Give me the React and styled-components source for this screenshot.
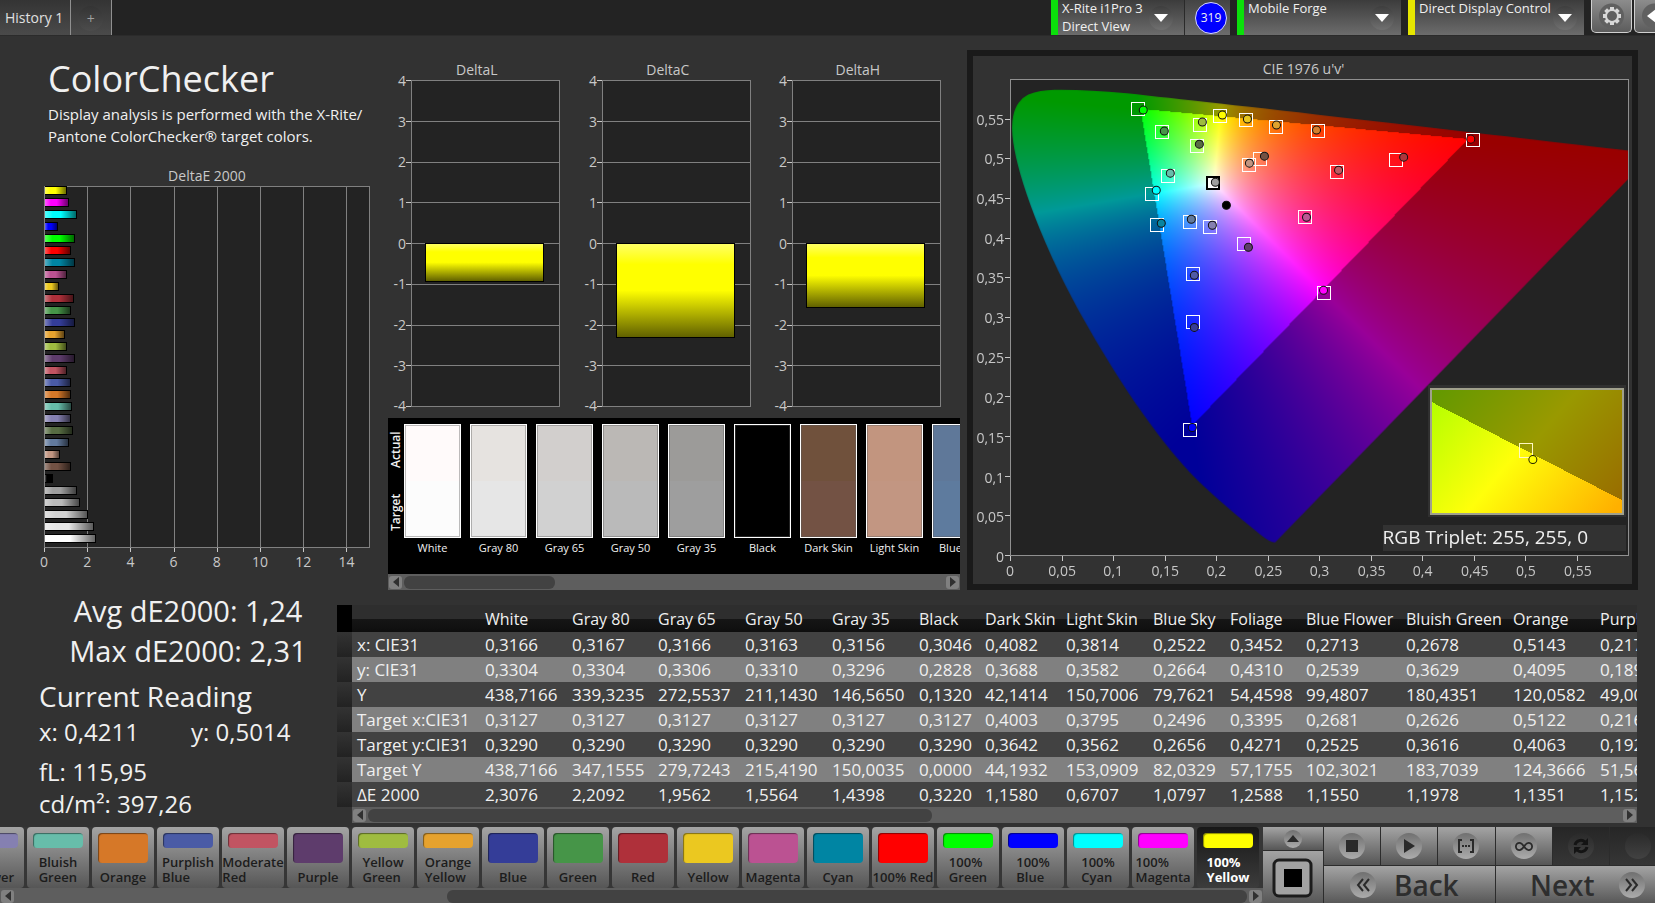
import React, { useEffect, useRef } from "react";
import styled, { createGlobalStyle, css } from "styled-components";

const FONT = '"Open Sans", "Noto Sans", "Liberation Sans", sans-serif';

const COLORS = {
  page: "#323232",
  dark: "#232323",
  frame: "#1a1a1a",
  grid: "#808080",
  tick: "#c8c8c8",
  text: "#f0f0f0",
  track: "#5e5e5e",
  thumb: "#424242",
};

const PATCHES = [
  { name: "White", color: "#ffffff", actual: "#fffafa", target: "#fcfcfc", de: 2.3076 },
  { name: "Gray 80", color: "#e6e6e6", actual: "#e6e3e0", target: "#e6e6e6", de: 2.2092 },
  { name: "Gray 65", color: "#d1d1d1", actual: "#d2cfcd", target: "#d1d1d1", de: 1.9562 },
  { name: "Gray 50", color: "#bababa", actual: "#bbb8b5", target: "#bababa", de: 1.5564 },
  { name: "Gray 35", color: "#9e9e9e", actual: "#9c9b99", target: "#9e9e9e", de: 1.4398 },
  { name: "Black", color: "#000000", actual: "#000000", target: "#000000", de: 0.322 },
  { name: "Dark Skin", color: "#735244", actual: "#70513c", target: "#735244", de: 1.158 },
  { name: "Light Skin", color: "#c29682", actual: "#c2957f", target: "#c29682", de: 0.6707 },
  { name: "Blue Sky", color: "#627a9d", actual: "#5f7899", target: "#5e7b9e", de: 1.0797 },
  { name: "Foliage", color: "#576c43", de: 1.2588 },
  { name: "Blue Flower", color: "#8580b1", de: 1.155 },
  { name: "Bluish Green", color: "#67bdaa", de: 1.1978 },
  { name: "Orange", color: "#d67828", de: 1.1351 },
  { name: "Purplish Blue", color: "#4a5ba6", de: 1.1527 },
  { name: "Moderate Red", color: "#c15462", de: 0.98 },
  { name: "Purple", color: "#5e3c6c", de: 1.36 },
  { name: "Yellow Green", color: "#9fbc40", de: 0.98 },
  { name: "Orange Yellow", color: "#e6a22e", de: 0.89 },
  { name: "Blue", color: "#343d98", de: 1.36 },
  { name: "Green", color: "#469548", de: 1.14 },
  { name: "Red", color: "#af303a", de: 1.31 },
  { name: "Yellow", color: "#ebc820", de: 0.62 },
  { name: "Magenta", color: "#bb5292", de: 0.99 },
  { name: "Cyan", color: "#0085a3", de: 1.36 },
  { name: "100% Red", color: "#ff0000", de: 1.14 },
  { name: "100% Green", color: "#00ff00", de: 1.36 },
  { name: "100% Blue", color: "#0000ff", de: 0.57 },
  { name: "100% Cyan", color: "#00ffff", de: 1.45 },
  { name: "100% Magenta", color: "#ff00ff", de: 1.08 },
  { name: "100% Yellow", color: "#ffff00", de: 0.99 },
];

const COLUMNS = [
  { name: "White", width: 87, values: ["0,3166", "0,3304", "438,7166", "0,3127", "0,3290", "438,7166", "2,3076"] },
  { name: "Gray 80", width: 86, values: ["0,3167", "0,3304", "339,3235", "0,3127", "0,3290", "347,1555", "2,2092"] },
  { name: "Gray 65", width: 87, values: ["0,3166", "0,3306", "272,5537", "0,3127", "0,3290", "279,7243", "1,9562"] },
  { name: "Gray 50", width: 87, values: ["0,3163", "0,3310", "211,1430", "0,3127", "0,3290", "215,4190", "1,5564"] },
  { name: "Gray 35", width: 87, values: ["0,3156", "0,3296", "146,5650", "0,3127", "0,3290", "150,0035", "1,4398"] },
  { name: "Black", width: 66, values: ["0,3046", "0,2828", "0,1320", "0,3127", "0,3290", "0,0000", "0,3220"] },
  { name: "Dark Skin", width: 81, values: ["0,4082", "0,3688", "42,1414", "0,4003", "0,3642", "44,1932", "1,1580"] },
  { name: "Light Skin", width: 87, values: ["0,3814", "0,3582", "150,7006", "0,3795", "0,3562", "153,0909", "0,6707"] },
  { name: "Blue Sky", width: 77, values: ["0,2522", "0,2664", "79,7621", "0,2496", "0,2656", "82,0329", "1,0797"] },
  { name: "Foliage", width: 76, values: ["0,3452", "0,4310", "54,4598", "0,3395", "0,4271", "57,1755", "1,2588"] },
  { name: "Blue Flower", width: 100, values: ["0,2713", "0,2539", "99,4807", "0,2681", "0,2525", "102,3021", "1,1550"] },
  { name: "Bluish Green", width: 107, values: ["0,2678", "0,3629", "180,4351", "0,2626", "0,3616", "183,7039", "1,1978"] },
  { name: "Orange", width: 87, values: ["0,5143", "0,4095", "120,0582", "0,5122", "0,4063", "124,3666", "1,1351"] },
  { name: "Purplish Blue", width: 117, values: ["0,2171", "0,1895", "49,0061", "0,2161", "0,1921", "51,5612", "1,1527"] },
];

const ROWS = ["x: CIE31", "y: CIE31", "Y", "Target x:CIE31", "Target y:CIE31", "Target Y", "ΔE 2000"];

// CIE 1931 xy coordinates of the spectral locus
const LOCUS = [
  [0.1741, 0.005], [0.1714, 0.0051], [0.1644, 0.0109], [0.1566, 0.0177],
  [0.144, 0.0297], [0.1355, 0.0399], [0.1241, 0.0578], [0.1096, 0.0868],
  [0.0913, 0.1327], [0.0687, 0.2007], [0.0454, 0.295], [0.0235, 0.4127],
  [0.0082, 0.5384], [0.0039, 0.6548], [0.0139, 0.7502], [0.0389, 0.812],
  [0.0743, 0.8338], [0.1142, 0.8262], [0.1547, 0.8059], [0.2296, 0.7543],
  [0.3016, 0.6923], [0.3731, 0.6245], [0.4441, 0.5547], [0.5125, 0.4866],
  [0.5752, 0.4242], [0.627, 0.3725], [0.6658, 0.334], [0.6915, 0.3083],
  [0.719, 0.2809], [0.7347, 0.2653],
];

const GAMUT = [[0.444, 0.5245], [0.1265, 0.5625], [0.1765, 0.164]];

const PLOT = { x: 37, y: 23, w: 618, h: 476, max: 0.6 };

// [target x, target y, actual x, actual y, fill] inside the plot
const MARKERS = [
  [128, 29, 133, 31, "#00ff00"],
  [152, 52, 154, 52, "#469548"],
  [190, 45, 192, 43, "#9dbc40"],
  [210, 36, 212, 36, "#ffff00"],
  [236, 40, 237, 40, "#e7c71f"],
  [266, 47, 266, 46, "#e0a32e"],
  [308, 51, 306, 51, "#d67e2c"],
  [187, 66, 189, 65, "#576c43"],
  [250, 79, 254, 77, "#735244"],
  [239, 85, 239, 84, "#c29682"],
  [327, 92, 328, 91, "#c15a63"],
  [158, 96, 160, 94, "#67bdaa"],
  [142, 114, 146, 111, "#00ffff"],
  [147, 145, 151, 144, "#0885a1"],
  [180, 142, 181, 140, "#627a9d"],
  [200, 147, 202, 146, "#8580b1"],
  [295, 137, 296, 138, "#bb5695"],
  [234, 164, 238, 168, "#5e3c6c"],
  [183, 194, 184, 196, "#505ba6"],
  [314, 213, 313, 211, "#ff00ff"],
  [183, 242, 184, 248, "#383d96"],
  [463, 60, 460, 60, "#ff0000"],
  [386, 80, 393, 78, "#af363c"],
  [180, 350, 182, 348, "#0000ff"],
];

const xyToUv = ([x, y]) => {
  const d = -2 * x + 12 * y + 3;
  return [(4 * x) / d, (9 * y) / d];
};

const uvToRgb = (u, v) => {
  const X = (9 * u) / (4 * v);
  const Z = (12 - 3 * u - 20 * v) / (4 * v);
  const rgb = [
    3.2406 * X - 1.5372 - 0.4986 * Z,
    -0.9689 * X + 1.8758 + 0.0415 * Z,
    0.0557 * X - 0.204 + 1.057 * Z,
  ].map((c) => Math.max(c, 0));
  const top = Math.max(...rgb);
  return rgb.map((c) => (255 * c) / top);
};

const insideGamut = (u, v) => {
  const sides = GAMUT.map(([ax, ay], i) => {
    const [bx, by] = GAMUT[(i + 1) % 3];
    return (bx - ax) * (v - ay) - (by - ay) * (u - ax) > 0;
  });
  return sides.every((s) => s === sides[0]);
};

const paintDiagram = (canvas) => {
  const { w, h, max } = PLOT;
  const ctx = canvas.getContext("2d");
  const image = ctx.createImageData(w, h);
  for (let py = 0; py < h; py++) {
    for (let px = 0; px < w; px++) {
      const u = ((px + 0.5) / w) * max;
      const v = ((h - py - 0.5) / h) * max;
      const level = insideGamut(u, v) ? 1 : 0.6;
      const [r, g, b] = uvToRgb(u, v);
      image.data.set([r * level, g * level, b * level, 255], (py * w + px) * 4);
    }
  }
  ctx.putImageData(image, 0, 0);

  // keep only what lies within the locus
  const points = LOCUS.map(xyToUv).map(([u, v]) => [(u / max) * w, h - (v / max) * h]);
  const middle = (a, b) => [(a[0] + b[0]) / 2, (a[1] + b[1]) / 2];
  ctx.globalCompositeOperation = "destination-in";
  ctx.beginPath();
  ctx.moveTo(...points[0]);
  points.slice(1, -1).forEach((p, i) => {
    ctx.quadraticCurveTo(...p, ...middle(p, points[i + 2]));
  });
  ctx.lineTo(...points[points.length - 1]);
  ctx.closePath();
  ctx.fill();
};

const formatTick = (n) => String(Number(n.toFixed(2))).replace(".", ",");

const range = (count) => Array.from({ length: count }, (_, i) => i);

const ScrollBar = ({ start, size, label }) => (
  <Track>
    <ScrollButton aria-label={`Scroll ${label} left`}>
      <svg width="6" height="10" viewBox="0 0 6 10"><path d="M6 0v10L0 5z" /></svg>
    </ScrollButton>
    <Rail>
      <Thumb style={{ marginLeft: `${start}%`, width: `${size}%` }} />
    </Rail>
    <ScrollButton aria-label={`Scroll ${label} right`}>
      <svg width="6" height="10" viewBox="0 0 6 10"><path d="M0 0v10l6-5z" /></svg>
    </ScrollButton>
  </Track>
);

const DeviceMenu = ({ lines, color }) => (
  <Device $color={color}>
    <DeviceText>
      {lines.map((line) => (
        <span key={line}>{line}</span>
      ))}
    </DeviceText>
    <DeviceArrow>
      <svg width="14" height="8" viewBox="0 0 14 8"><path d="M0 0h14L7 8z" fill="#fff" /></svg>
    </DeviceArrow>
  </Device>
);

const TopBar = () => (
  <Header>
    <Tab>History 1</Tab>
    <Tab aria-label="Add tab">
      <AddMark>+</AddMark>
    </Tab>
    <Devices>
      <DeviceGroup>
        <DeviceMenu lines={["X-Rite i1Pro 3", "Direct View"]} color="#0be00b" />
        <BadgeHolder>
          <Badge>319</Badge>
        </BadgeHolder>
      </DeviceGroup>
      <DeviceMenu lines={["Mobile Forge"]} color="#0be00b" />
      <DeviceMenu lines={["Direct Display Control"]} color="#e6e600" />
      <SquareGroup>
        <SquareButton aria-label="Settings">
          <svg width="24" height="26" viewBox="-12 -13 24 26">
            <circle r="6" fill="none" stroke="#d8d8d8" strokeWidth="2" />
            {range(8).map((i) => (
              <rect key={i} x="-2" y="-9" width="4" height="3" fill="#d8d8d8" transform={`rotate(${i * 45})`} />
            ))}
          </svg>
        </SquareButton>
        <SquareButton aria-label="Collapse">
          <svg width="24" height="26" viewBox="-12 -13 24 26"><path d="M1 -7v14L-8 0z" fill="#fff" /></svg>
        </SquareButton>
      </SquareGroup>
    </Devices>
  </Header>
);

const DeltaEChart = () => {
  const unit = 324 / 15;
  return (
    <Chart viewBox="0 0 388 410" role="img" aria-label="DeltaE 2000">
      <defs>
        <linearGradient id="barShade">
          <stop offset="0" stopColor="#fff" stopOpacity="0.35" />
          <stop offset="0.25" stopColor="#fff" stopOpacity="0" />
          <stop offset="0.5" stopColor="#000" stopOpacity="0" />
          <stop offset="1" stopColor="#000" stopOpacity="0.6" />
        </linearGradient>
      </defs>
      <text x="207" y="15" textAnchor="middle">DeltaE 2000</text>
      <rect x="44" y="20" width="325" height="361" fill={COLORS.dark} />
      {range(8).map((i) => (
        <g key={i}>
          <path d={`M${Math.round(44 + i * 2 * unit)} 20v361`} stroke={COLORS.grid} />
          <path d={`M${Math.round(44 + i * 2 * unit)} 381v5`} stroke={COLORS.tick} />
          <text x={44 + i * 2 * unit} y="401" textAnchor="middle">{i * 2}</text>
        </g>
      ))}
      <rect x="44" y="20" width="325" height="361" fill="none" stroke={COLORS.grid} />
      {[...PATCHES].reverse().map(({ name, color, de }, i) => (
        <g key={name}>
          <rect x="45" y={20 + i * 12} width={de * unit} height="8" fill={color} />
          <rect x="45" y={20 + i * 12} width={de * unit} height="8" fill="url(#barShade)" />
          <path d={`M45 ${20 + i * 12}h${Math.round(de * unit)}v8H45`} fill="none" stroke="#000" />
        </g>
      ))}
    </Chart>
  );
};

const DeltaChart = ({ title, value }) => {
  const unit = 326 / 8;
  return (
    <Chart viewBox="0 0 191 358" role="img" aria-label={title}>
      <defs>
        <linearGradient id="yellowBar" x2="0" y2="1">
          <stop offset="0" stopColor="#ffff66" />
          <stop offset="0.22" stopColor="#ffff00" />
          <stop offset="0.5" stopColor="#ffff00" />
          <stop offset="1" stopColor="#606000" />
        </linearGradient>
      </defs>
      <text x="89" y="14" textAnchor="middle">{title}</text>
      <rect x="24" y="20" width="148" height="326" fill={COLORS.dark} />
      {range(9).map((i) => (
        <g key={i}>
          <path d={`M24 ${Math.round(20 + i * unit)}h148`} stroke={COLORS.grid} />
          <path d={`M18 ${Math.round(20 + i * unit)}h6`} stroke={COLORS.tick} />
          <text x="18" y={25 + i * unit} textAnchor="end">{4 - i}</text>
        </g>
      ))}
      <rect x="24" y="20" width="148" height="326" fill="none" stroke={COLORS.grid} />
      <rect x="38" y="183" width="118" height={value * unit} fill="url(#yellowBar)" stroke="#000" />
    </Chart>
  );
};

const Magnifier = () => (
  <g transform="translate(420 309)">
    <defs>
      <linearGradient id="lit" gradientUnits="userSpaceOnUse" x1="7" y1="5" x2="168" y2="140">
        <stop offset="0" stopColor="#b4ff00" />
        <stop offset="0.47" stopColor="#ffff0a" />
        <stop offset="1" stopColor="#ffb000" />
      </linearGradient>
      <linearGradient id="unlit" gradientUnits="userSpaceOnUse" x1="7" y1="5" x2="168" y2="140">
        <stop offset="0" stopColor="#659900" />
        <stop offset="0.5" stopColor="#999900" />
        <stop offset="1" stopColor="#996c00" />
      </linearGradient>
    </defs>
    <rect x="-3" y="-3" width="198" height="131" fill="#303030" />
    <rect width="192" height="125" fill="url(#unlit)" />
    <path d="M0 13L192 112V125H0z" fill="url(#lit)" />
    <rect width="192" height="125" fill="none" stroke="#a0a08c" strokeWidth="2" />
    <rect x="89" y="55" width="13" height="14" fill="none" stroke="#fff8c0" strokeWidth="1" />
    <circle cx="102" cy="71" r="4" fill="#ffff00" stroke="#222200" shapeRendering="auto" />
  </g>
);

const CieChart = () => {
  const canvas = useRef(null);
  useEffect(() => paintDiagram(canvas.current), []);
  const { x, y, w, h } = PLOT;

  return (
    <CiePanel>
      <Chart viewBox="0 0 658 527" role="img" aria-label="CIE 1976 u'v' chromaticity diagram">
        <text x="330" y="18" textAnchor="middle">CIE 1976 u'v'</text>
        <rect x={x} y={y} width={w} height={h} fill={COLORS.dark} />
        <foreignObject x={x} y={y} width={w} height={h}>
          <Diagram ref={canvas} width={w} height={h} />
        </foreignObject>
        <g transform={`translate(${x} ${y})`}>
          <rect width={w} height={h} fill="none" stroke="#909090" />
          {range(12).map((i) => {
            const tx = Math.round((i * w) / 12);
            const ty = Math.round(h - (i * h) / 12);
            return (
              <g key={i}>
                <path d={`M${tx} ${h}v5M-5 ${ty}h5`} stroke={COLORS.tick} />
                <text x={tx} y={h + 20} textAnchor="middle">{formatTick(i * 0.05)}</text>
                <text x="-6" y={ty + 6} textAnchor="end">{formatTick(i * 0.05)}</text>
              </g>
            );
          })}
          <rect x="197" y="98" width="12" height="12" fill="#fff" stroke="#000" strokeWidth="2" />
          <Spot cx="205" cy="103" r="4" fill="#a0a0a0" />
          <Spot cx="216" cy="126" r="4" fill="#000" />
          {MARKERS.map(([sx, sy, cx, cy, fill]) => (
            <g key={fill}>
              <rect x={sx - 7} y={sy - 6} width="13" height="13" fill="none" stroke="#fff" />
              <Spot cx={cx} cy={cy} r="4" fill={fill} />
            </g>
          ))}
          <Magnifier />
          <rect x="372" y="445" width="243" height="26" fill={COLORS.page} />
          <Triplet x="372" y="464">RGB Triplet: 255, 255, 0</Triplet>
        </g>
      </Chart>
    </CiePanel>
  );
};

const SwatchStrip = () => (
  <Strip>
    <StripRow>
      <SideLabels>
        <span>Target</span>
        <span>Actual</span>
      </SideLabels>
      {PATCHES.slice(0, 9).map(({ name, actual, target }) => (
        <Swatch key={name}>
          <SwatchBox $actual={actual} $target={target} />
          <figcaption>{name}</figcaption>
        </Swatch>
      ))}
    </StripRow>
    <ScrollBar start={0} size={28} label="swatches" />
  </Strip>
);

const Readings = () => (
  <ReadingColumn>
    <Totals>
      <div>Avg dE2000: 1,24</div>
      <div>Max dE2000: 2,31</div>
    </Totals>
    <ReadingTitle>Current Reading</ReadingTitle>
    <Pair>
      <span>x: 0,4211</span>
      <span>y: 0,5014</span>
    </Pair>
    <Luminance>
      <div>fL: 115,95</div>
      <div>cd/m²: 397,26</div>
    </Luminance>
  </ReadingColumn>
);

const ReadingTable = () => (
  <TableArea>
    <TableClip>
      <Table>
        <colgroup>
          <col style={{ width: 15 }} />
          <col style={{ width: 128 }} />
          {COLUMNS.map(({ name, width }) => (
            <col key={name} style={{ width }} />
          ))}
        </colgroup>
        <thead>
          <tr>
            <td />
            <td />
            {COLUMNS.map(({ name }) => (
              <th key={name} scope="col">{name}</th>
            ))}
          </tr>
        </thead>
        <tbody>
          {ROWS.map((label, i) => (
            <tr key={label}>
              <td />
              <th scope="row">{label}</th>
              {COLUMNS.map(({ name, values }) => (
                <td key={name}>{values[i]}</td>
              ))}
            </tr>
          ))}
        </tbody>
      </Table>
    </TableClip>
    <TableScroll>
      <ScrollBar start={0} size={45} label="table" />
    </TableScroll>
  </TableArea>
);

const PatchBar = () => (
  <Patches>
    <PatchRow>
      {PATCHES.slice(10).map(({ name, color }) => {
        const lines = name === "100% Red" ? [name] : name.split(" ");
        return (
          <PatchButton key={name} aria-pressed={name === "100% Yellow"}>
            <PatchColor $color={color} $short={lines.length > 1} />
            <PatchLabel>
              {lines.map((line) => (
                <span key={line}>{line}</span>
              ))}
            </PatchLabel>
          </PatchButton>
        );
      })}
    </PatchRow>
    <ScrollBar start={35} size={65} label="patches" />
  </Patches>
);

const Transport = () => (
  <Controls>
    <WindowColumn>
      <PanelButton aria-label="Expand">
        <Knob $small>
          <svg width="12" height="7" viewBox="0 0 12 7"><path d="M0 7L6 0l6 7z" /></svg>
        </Knob>
      </PanelButton>
      <PanelButton aria-label="Pattern window">
        <svg width="42" height="40" viewBox="0 0 42 40">
          <rect x="2" y="2" width="37" height="36" rx="5" fill="#a2a2a2" stroke="#1c1c1c" strokeWidth="3" />
          <rect x="12" y="11" width="18" height="18" fill="#000" />
        </svg>
      </PanelButton>
    </WindowColumn>
    <TransportColumn>
      <TransportRow>
        <PanelButton aria-label="Stop">
          <Knob><svg width="12" height="12"><path d="M0 0h12v12H0z" /></svg></Knob>
        </PanelButton>
        <PanelButton aria-label="Play">
          <Knob><svg width="12" height="14"><path d="M1 0v14l11-7z" /></svg></Knob>
        </PanelButton>
        <PanelButton aria-label="Read range">
          <Knob>
            <svg width="18" height="14" viewBox="0 0 18 14">
              <path d="M5 1H2v12h3M13 1h3v12h-3" fill="none" stroke="#2a2a2a" strokeWidth="2" />
              <path d="M5 6h2v2H5zM8 6h2v2H8zM11 6h2v2h-2z" />
            </svg>
          </Knob>
        </PanelButton>
        <PanelButton aria-label="Loop">
          <Knob>
            <svg width="18" height="11" viewBox="0 0 20 12">
              <path d="M10 6C8 3 7 2 5 2a4 4 0 0 0 0 8c2 0 3-1 5-4s3-4 5-4a4 4 0 0 1 0 8c-2 0-3-1-5-4z" fill="none" stroke="#2a2a2a" strokeWidth="2" />
            </svg>
          </Knob>
        </PanelButton>
        <PanelButton aria-label="Refresh" disabled>
          <Knob>
            <svg width="18" height="18" viewBox="0 0 18 18">
              <path d="M3 8a6 6 0 0 1 10-3M15 10a6 6 0 0 1-10 3" fill="none" stroke="#141414" strokeWidth="3" />
              <path d="M16 1v7H9zM2 17v-7h7z" fill="#141414" />
            </svg>
          </Knob>
        </PanelButton>
        <PanelButton aria-label="Record" disabled>
          <Knob />
        </PanelButton>
      </TransportRow>
      <TransportRow>
        <StepButton>
          <Knob>
            <svg width="14" height="14" viewBox="0 0 14 14">
              <path d="M7 1L2 7l5 6M13 1L8 7l5 6" fill="none" stroke="#2a2a2a" strokeWidth="2" />
            </svg>
          </Knob>
          Back
        </StepButton>
        <StepButton>
          Next
          <Knob>
            <svg width="14" height="14" viewBox="0 0 14 14">
              <path d="M1 1l5 6-5 6M7 1l5 6-5 6" fill="none" stroke="#2a2a2a" strokeWidth="2" />
            </svg>
          </Knob>
        </StepButton>
      </TransportRow>
    </TransportColumn>
  </Controls>
);

const App = () => (
  <>
    <GlobalStyle />
    <Page>
      <TopBar />
      <Upper>
        <Intro>
          <Title>ColorChecker</Title>
          <Description>
            Display analysis is performed with the X-Rite/
            <br />
            Pantone ColorChecker® target colors.
          </Description>
          <DeltaEChart />
        </Intro>
        <Middle>
          <DeltaCharts>
            <DeltaChart title="DeltaL" value={0.92} />
            <DeltaChart title="DeltaC" value={2.3} />
            <DeltaChart title="DeltaH" value={1.56} />
          </DeltaCharts>
          <SwatchStrip />
        </Middle>
        <CieChart />
      </Upper>
      <Lower>
        <Readings />
        <ReadingTable />
      </Lower>
      <Footer>
        <PatchBar />
        <Transport />
      </Footer>
    </Page>
  </>
);

const GlobalStyle = createGlobalStyle`
  *, *::before, *::after {
    box-sizing: border-box;
  }
  body {
    margin: 0;
    background: ${COLORS.page};
    color: ${COLORS.text};
    font-family: ${FONT};
    overflow-x: hidden;
  }
  button {
    margin: 0;
    padding: 0;
    border: 0;
    font: inherit;
    color: inherit;
    cursor: pointer;
  }
`;

const steel = css`
  background: linear-gradient(#a4a4a4, #7d7d7d 50%, #565656);
`;

const Page = styled.main`
  display: flex;
  flex-direction: column;
  min-height: 100vh;
`;

const Header = styled.header`
  display: flex;
  height: 36px;
  background: ${COLORS.dark};
  border-bottom: 1px solid #2b2b2b;
`;

const Tab = styled.button`
  display: flex;
  align-items: center;
  padding: 0 7px 0 5px;
  background: linear-gradient(#343434, #4a4a4a);
  border-right: 1px solid #909090;
  font-size: 14px;
  color: #e0e0e0;
`;

const AddMark = styled.span`
  width: 25px;
  height: 25px;
  margin: 2px 1px 0 2px;
  border-radius: 50%;
  background: linear-gradient(#343434, #4c4c4c);
  line-height: 25px;
  color: #a0a0a0;
`;

const Devices = styled.div`
  display: grid;
  grid-template-columns: 179fr 164fr 176fr 64px;
  grid-template-rows: 35px;
  gap: 7px;
  width: 604px;
  margin-left: auto;
`;

const DeviceGroup = styled.div`
  display: grid;
  grid-template-columns: 1fr 45px;
  grid-template-rows: 35px;
`;

const Device = styled.button`
  display: flex;
  align-items: flex-start;
  justify-content: space-between;
  min-width: 0;
  padding: 0 7px 0 4px;
  background: linear-gradient(#3c3c3c, #6c6c6c);
  border-left: 7px solid ${(p) => p.$color};
  font-size: 13px;
  line-height: 18px;
  text-align: left;
  white-space: nowrap;

  ${DeviceGroup} & {
    padding-right: 11px;
    border-right: 1px solid #2a2a2a;
  }
`;

const DeviceText = styled.span`
  display: flex;
  flex-direction: column;
  margin-top: -1px;
`;

const DeviceArrow = styled.span`
  display: grid;
  place-items: center;
  align-self: center;
  flex: none;
  width: 24px;
  height: 24px;
  margin-left: -12px;
  border-radius: 50%;
  background: linear-gradient(#3e3e3e, #707070);
`;

const BadgeHolder = styled.div`
  display: grid;
  place-items: center;
  padding-left: 7px;
  background: linear-gradient(#444444, #6c6c6c);
`;

const Badge = styled.span`
  width: 32px;
  height: 32px;
  border: 1px solid #d8d8ff;
  border-radius: 50%;
  background: #0000ff;
  font-size: 12px;
  line-height: 30px;
  text-align: center;
`;

const SquareGroup = styled.div`
  display: flex;
  gap: 2px;
  overflow: hidden;
`;

const SquareButton = styled.button`
  display: grid;
  place-items: center;
  flex: 0 0 41px;
  height: 33px;
  border: 1px solid #d0d0d0;
  border-top: 0;
  border-radius: 0 0 5px 5px;
  background: radial-gradient(circle, #606060 12px, transparent 13px), linear-gradient(#8c8c8c, #5c5c5c);
  overflow: hidden;
`;

const Upper = styled.section`
  display: grid;
  grid-template-columns: 388fr 572fr 678fr;
  padding: 0 17px 1px 0;
`;

const Chart = styled.svg`
  display: block;
  width: 100%;
  height: auto;
  shape-rendering: crispEdges;
  font-size: 14px;

  text {
    fill: ${COLORS.tick};
  }
`;

const Intro = styled.div`
  padding-top: 21px;
`;

const Title = styled.h1`
  margin: 0 0 2px;
  padding-left: 48px;
  font-size: 36px;
  font-weight: 400;
  line-height: 44px;
`;

const Description = styled.p`
  margin: 0 0 19px;
  padding-left: 48px;
  font-size: 15px;
  line-height: 22px;
  white-space: nowrap;
`;

const Middle = styled.div`
  min-width: 0;
  padding-top: 25px;
`;

const DeltaCharts = styled.div`
  display: grid;
  grid-template-columns: repeat(3, 1fr);
`;

const Strip = styled.div`
  background: #000;
`;

const StripRow = styled.div`
  display: flex;
  gap: 9px;
  height: 156px;
  padding-top: 6px;
  overflow: hidden;
`;

const SideLabels = styled.div`
  display: flex;
  justify-content: space-between;
  width: 16px;
  height: 114px;
  margin-right: -9px;
  padding: 7px 0;
  writing-mode: vertical-rl;
  rotate: 180deg;
  font-size: 12px;
  font-weight: 600;
  line-height: 16px;
`;

const Swatch = styled.figure`
  flex: 0 0 57px;
  margin: 0;
  font-size: 11px;
  line-height: 20px;
  text-align: center;
  white-space: nowrap;
`;

const SwatchBox = styled.div`
  height: 114px;
  border: 1px solid #fff;
  box-shadow: inset 0 0 0 1px rgba(90, 90, 90, 0.4);
  background: linear-gradient(${(p) => p.$actual} 50%, ${(p) => p.$target} 50%);
`;

const Track = styled.div`
  display: flex;
  align-items: center;
  gap: 2px;
  height: 16px;
  padding: 0 1px;
  background: ${COLORS.track};
`;

const ScrollButton = styled.button`
  display: grid;
  place-items: center;
  width: 13px;
  height: 13px;
  border-radius: 3px;
  background: #808080;
  fill: #303030;
`;

const Rail = styled.div`
  flex: 1;
`;

const Thumb = styled.div`
  height: 13px;
  border-radius: 6px;
  background: ${COLORS.thumb};
`;

const CiePanel = styled.div`
  margin: 14px 0 0 7px;
  border: 6px solid ${COLORS.frame};
  align-self: start;
`;

const Diagram = styled.canvas`
  display: block;
`;

const Spot = styled.circle`
  stroke: #101010;
  stroke-width: 1px;
  shape-rendering: auto;
`;

const Triplet = styled.text`
  font-size: 19px;

  ${Chart} & {
    fill: ${COLORS.text};
  }
`;

const Lower = styled.section`
  display: flex;
  padding-right: 18px;
`;

const ReadingColumn = styled.div`
  flex: 0 0 337px;
  padding-left: 39px;
  font-size: 24px;
  line-height: 32px;
`;

const Totals = styled.div`
  margin-bottom: 5px;
  font-size: 29px;
  line-height: 40px;
  text-align: center;
`;

const ReadingTitle = styled.h2`
  margin: 0;
  font-size: 28px;
  font-weight: 400;
  line-height: 40px;
`;

const Pair = styled.div`
  display: grid;
  grid-template-columns: 152px 1fr;
`;

const Luminance = styled.div`
  margin-top: 8px;
`;

const TableArea = styled.div`
  flex: 1;
  min-width: 0;
  margin-top: 14px;
`;

const TableClip = styled.div`
  overflow: hidden;
`;

const TableScroll = styled.div`
  margin-left: 15px;
`;

const Table = styled.table`
  table-layout: fixed;
  width: 1375px;
  border-collapse: collapse;
  font-size: 17px;
  line-height: 24px;
  white-space: nowrap;

  th,
  td {
    height: 25px;
    padding: 0 0 0 5px;
    font-weight: 400;
    text-align: left;
  }

  thead tr {
    background: linear-gradient(#2e2e2e 50%, #161616 50%, #0e0e0e);
    font-size: 16px;
  }

  thead th,
  thead td {
    height: 27px;
  }

  thead td:first-child {
    background: #000;
  }

  tbody tr {
    background: #424242;
  }

  tbody tr:nth-child(even) {
    background: #808080;
  }

  tbody td:first-child {
    background: linear-gradient(#333333, #222222);
  }
`;

const Footer = styled.footer`
  display: flex;
  margin-top: 4px;
`;

const Patches = styled.div`
  flex: 1;
  min-width: 0;
`;

const PatchRow = styled.div`
  display: flex;
  justify-content: flex-end;
  gap: 3px;
  height: 61px;
  padding-right: 4px;
  overflow: hidden;
  background: #363636;
`;

const PatchButton = styled.button`
  display: flex;
  flex: 0 0 62px;
  flex-direction: column;
  align-items: center;
  justify-content: space-between;
  padding: 6px 0 3px;
  border-radius: 4px;
  ${steel}
  color: #1c1c1c;
  font-size: 13px;
  font-weight: 600;
  line-height: 15px;

  &[aria-pressed="true"] {
    background: linear-gradient(#181818, #3c3c3c);
    color: #fff;
    font-weight: 700;
  }
`;

const PatchColor = styled.span`
  width: 50px;
  height: ${(p) => (p.$short ? 15 : 30)}px;
  border-radius: 4px;
  background: ${(p) => p.$color};
  box-shadow: inset 1px 1px 1px rgba(0, 0, 0, 0.45);
`;

const PatchLabel = styled.span`
  display: flex;
  flex-direction: column;
  text-align: left;
  white-space: nowrap;
`;

const Controls = styled.div`
  display: flex;
  gap: 1px;
  width: 392px;
  background: #2c2c2c;
`;

const WindowColumn = styled.div`
  display: grid;
  grid-template-rows: 23px 1fr;
  gap: 1px;
  width: 60px;
`;

const PanelButton = styled.button`
  display: grid;
  place-items: center;
  ${steel}

  &:disabled {
    background: linear-gradient(#262626, #363636);
  }
`;

const Knob = styled.span`
  display: grid;
  place-items: center;
  width: ${(p) => (p.$small ? 18 : 26)}px;
  height: ${(p) => (p.$small ? 18 : 26)}px;
  border-radius: 50%;
  background: linear-gradient(#707070, #acacac);
  fill: #2a2a2a;

  button:disabled & {
    background: linear-gradient(#2a2a2a, #424242);
  }
`;

const TransportColumn = styled.div`
  display: grid;
  grid-template-rows: 1fr 1fr;
  gap: 1px;
  flex: 1;
  min-width: 0;
  overflow: hidden;
`;

const TransportRow = styled.div`
  display: flex;
  gap: 1px;
  width: 342px;

  ${PanelButton} {
    flex: 1;
  }
`;

const StepButton = styled.button`
  display: flex;
  flex: 0 0 171px;
  align-items: center;
  gap: 18px;
  padding-left: 26px;
  ${steel}
  color: #2e2e2e;
  font-size: 28px;
  font-weight: 600;
  line-height: 36px;

  &:last-child {
    gap: 24px;
    padding-left: 34px;
  }
`;

export default App;
